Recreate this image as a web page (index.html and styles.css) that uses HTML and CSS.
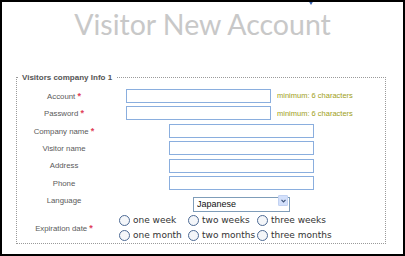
FILE: index.html
```html
<!DOCTYPE html>
<html>
<head>
    <title>Visitor New Account</title>
    <link rel="stylesheet" href="styles.css">
</head>
<body>
    <div class="frame">
        <span class="marker"></span>
        <h1 class="title">Visitor New Account</h1>

        <form class="account-form">
            <fieldset class="info">
                <legend>Visitors company Info 1</legend>

                <div class="row">
                    <label class="label">Account <span class="req">*</span></label>
                    <div class="field short">
                        <input type="text" class="text">
                        <span class="hint">minimum: 6 characters</span>
                    </div>
                </div>
                <div class="row">
                    <label class="label">Password <span class="req">*</span></label>
                    <div class="field short">
                        <input type="password" class="text">
                        <span class="hint">minimum: 6 characters</span>
                    </div>
                </div>
                <div class="row">
                    <label class="label">Company name <span class="req">*</span></label>
                    <div class="field wide"><input type="text" class="text"></div>
                </div>
                <div class="row">
                    <label class="label">Visitor name</label>
                    <div class="field wide"><input type="text" class="text"></div>
                </div>
                <div class="row">
                    <label class="label">Address</label>
                    <div class="field wide"><input type="text" class="text"></div>
                </div>
                <div class="row">
                    <label class="label">Phone</label>
                    <div class="field wide"><input type="text" class="text"></div>
                </div>
                <div class="row">
                    <label class="label">Language</label>
                    <div class="field lang">
                        <div class="select-box">
                            <select class="select">
                                <option>Japanese</option>
                                <option>English</option>
                            </select>
                            <span class="select-arrow">
                                <svg width="5" height="4" viewBox="0 0 5 4"><path d="M0.5 0.8 L2.5 2.8 L4.5 0.8" fill="none" stroke="#3f5478" stroke-width="1.2"/></svg>
                            </span>
                        </div>
                    </div>
                </div>
                <div class="row expire">
                    <label class="label">Expiration date <span class="req">*</span></label>
                    <div class="field radios">
                        <label class="choice"><input type="radio" name="period"> one week</label>
                        <label class="choice"><input type="radio" name="period"> two weeks</label>
                        <label class="choice"><input type="radio" name="period"> three weeks</label>
                        <label class="choice"><input type="radio" name="period"> one month</label>
                        <label class="choice"><input type="radio" name="period"> two months</label>
                        <label class="choice"><input type="radio" name="period"> three months</label>
                    </div>
                </div>
            </fieldset>
        </form>
    </div>
</body>
</html>
```

FILE: styles.css
```css
body {
    margin: 0;
    font-family: "Liberation Sans", Arial, sans-serif;
    background: #fff;
}

.frame {
    position: relative;
    width: 405px;
    height: 256px;
    box-sizing: border-box;
    border: 2px solid #000;
    background: #fff;
    overflow: hidden;
}

.marker {
    position: absolute;
    top: -2px;
    left: 306px;
    border-left: 3px solid transparent;
    border-right: 3px solid transparent;
    border-top: 5px solid #3a62ae;
}

.title {
    margin: 5px 0 0 0;
    text-align: center;
    font-family: Lato, "Open Sans", sans-serif;
    font-weight: 400;
    font-size: 28.5px;
    line-height: 35px;
    color: #c8c8c8;
}

.account-form {
    margin: 31px 0 0 0;
}

.info {
    margin: 0 0 0 14px;
    width: 370px;
    box-sizing: border-box;
    border: 1px dotted #9a9a9a;
    padding: 5px 0 0 0;
}

.info legend {
    margin-left: 1px;
    padding: 0 4px;
    font-size: 8px;
    font-weight: bold;
    color: #555;
}

.row {
    display: grid;
    grid-template-columns: 94px 1fr;
    align-items: center;
    height: 17.5px;
}

.label {
    text-align: center;
    font-size: 7.8px;
    color: #5a5a5a;
}

.req {
    color: #e0405a;
    font-weight: bold;
    font-size: 9px;
}

.field {
    display: flex;
    align-items: center;
}

.short { padding-left: 15px; }
.wide { padding-left: 58px; }
.lang { padding-left: 82px; }
.radios { padding-left: 8px; }

.text {
    width: 145px;
    height: 14px;
    box-sizing: border-box;
    border: 1px solid #8aaede;
    margin: 0;
    padding: 0 2px;
    font-size: 9px;
}

.hint {
    margin-left: 6px;
    font-size: 7.5px;
    color: #a0a020;
}

.select-box {
    position: relative;
    width: 97px;
    height: 15px;
}

.select {
    appearance: none;
    width: 100%;
    height: 100%;
    box-sizing: border-box;
    border: 1px solid #7f9db9;
    border-radius: 0;
    margin: 0;
    padding: 0 0 0 3px;
    background: #fff;
    font-family: "Liberation Sans", Arial, sans-serif;
    font-size: 9px;
    color: #111;
}

.select-arrow {
    position: absolute;
    top: 2px;
    right: 2px;
    width: 10px;
    height: 11px;
    box-sizing: border-box;
    border: 1px solid #c2d2f2;
    border-radius: 1px;
    background: #d3e0fb;
    display: flex;
    align-items: center;
    justify-content: center;
    pointer-events: none;
}

.expire {
    height: 30px;
    margin-top: 3px;
}

.radios {
    display: grid;
    grid-template-columns: 69px 69px auto;
    grid-auto-rows: 15px;
    align-items: center;
}

.choice {
    display: flex;
    align-items: center;
    gap: 3px;
    font-family: "DejaVu Sans", Verdana, sans-serif;
    font-size: 9px;
    color: #333;
    white-space: nowrap;
}

.choice input {
    appearance: none;
    width: 11px;
    height: 11px;
    margin: 0;
    border: 1px solid #4d6a94;
    border-radius: 50%;
    background: #f4f6f9;
}
```
